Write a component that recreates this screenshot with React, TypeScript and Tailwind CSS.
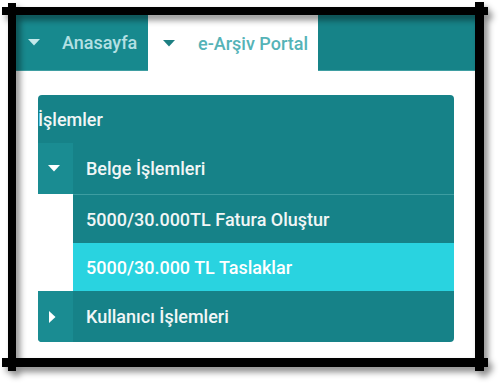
import React from "react"

function CaretDown({ className }: { className?: string }) {
  return (
    <svg width="12" height="7" viewBox="0 0 12 7" className={className}>
      <polygon points="0,0 12,0 6,6.5" fill="currentColor" />
    </svg>
  )
}

function CaretRight({ className }: { className?: string }) {
  return (
    <svg width="7" height="12" viewBox="0 0 7 12" className={className}>
      <polygon points="0,0 6.5,6 0,12" fill="currentColor" />
    </svg>
  )
}

export default function App() {
  return (
    <div
      className="relative w-[502px] h-[386px] bg-white overflow-hidden"
      style={{ fontFamily: "Roboto, 'Liberation Sans', sans-serif" }}
    >
      <div className="pl-[16px] pt-[15px]">
        <div className="w-[459px] h-[343px] bg-white">
          {/* Tabs */}
          <div className="flex h-[56px] bg-[#168388] border-b border-[#3f9ea2]">
            <div className="flex items-center w-[132px] bg-[#17898e] pl-[12px]">
              <CaretDown className="text-[#c4e8ea]" />
              <span className="ml-[22px] text-[18px] font-medium text-[#b3e0e3]">Anasayfa</span>
            </div>
            <div className="flex items-center w-[170px] bg-white pl-[15px] -mb-px">
              <CaretDown className="text-[#1d7f82]" />
              <span className="ml-[23px] text-[18px] font-medium text-[#55b3b7]">e-Arşiv Portal</span>
            </div>
          </div>

          {/* Menu panel */}
          <div className="ml-[22px] mt-[24px] w-[416px] rounded-[4px] overflow-hidden text-[18px] font-medium text-[#f1f6f6]">
            <div className="flex items-center h-[48px] bg-[#168288]">İşlemler</div>

            <div className="flex h-[51px] bg-[#168288]">
              <div className="flex items-center w-[35px] bg-[#1a8c92] pl-[10px]">
                <CaretDown className="text-white" />
              </div>
              <div className="flex items-center pl-[13px]">Belge İşlemleri</div>
            </div>

            <div className="ml-[35px] border-t border-[#3d9da1]">
              <div className="flex items-center h-[48px] bg-[#168288] pl-[13px]">
                5000/30.000TL Fatura Oluştur
              </div>
              <div className="flex items-center h-[48px] bg-[#29d3e0] pl-[13px] text-white">
                5000/30.000 TL Taslaklar
              </div>
            </div>

            <div className="flex h-[51px] bg-[#168288]">
              <div className="flex items-center w-[35px] bg-[#1a8c92] pl-[11px]">
                <CaretRight className="text-white" />
              </div>
              <div className="flex items-center pl-[13px]">Kullanıcı İşlemleri</div>
            </div>
          </div>
        </div>
      </div>

      {/* Hand-drawn black frame around the screenshot */}
      <svg className="absolute inset-0 pointer-events-none" width="502" height="386">
        <defs>
          <filter id="sh" x="-10%" y="-10%" width="130%" height="130%">
            <feDropShadow dx="4" dy="5" stdDeviation="3" floodColor="#000" floodOpacity="0.45" />
          </filter>
        </defs>
        <g filter="url(#sh)" fill="#000">
          <rect x="2" y="7" width="486" height="8" />
          <rect x="8" y="3" width="8" height="368" />
          <rect x="475" y="2" width="9" height="369" />
          <rect x="2" y="358" width="486" height="9" />
        </g>
      </svg>
    </div>
  )
}
